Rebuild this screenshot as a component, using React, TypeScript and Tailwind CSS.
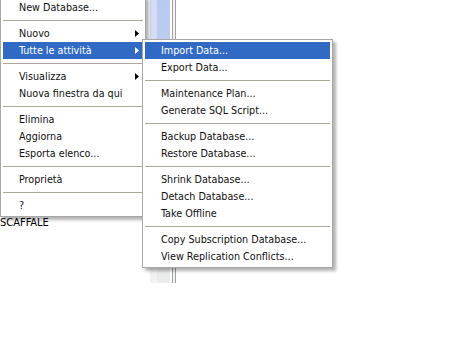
import React from 'react';

type Entry = { label?: string; sep?: boolean; sub?: boolean; active?: boolean };

const mainItems: Entry[] = [
  { label: 'New Database...' },
  { sep: true },
  { label: 'Nuovo', sub: true },
  { label: 'Tutte le attività', sub: true, active: true },
  { sep: true },
  { label: 'Visualizza', sub: true },
  { label: 'Nuova finestra da qui' },
  { sep: true },
  { label: 'Elimina' },
  { label: 'Aggiorna' },
  { label: 'Esporta elenco...' },
  { sep: true },
  { label: 'Proprietà' },
  { sep: true },
  { label: '?' },
];

const taskItems: Entry[] = [
  { label: 'Import Data...', active: true },
  { label: 'Export Data...' },
  { sep: true },
  { label: 'Maintenance Plan...' },
  { label: 'Generate SQL Script...' },
  { sep: true },
  { label: 'Backup Database...' },
  { label: 'Restore Database...' },
  { sep: true },
  { label: 'Shrink Database...' },
  { label: 'Detach Database...' },
  { label: 'Take Offline' },
  { sep: true },
  { label: 'Copy Subscription Database...' },
  { label: 'View Replication Conflicts...' },
];

const Arrow: React.FC<{ white?: boolean }> = ({ white }) => (
  <svg width="4" height="7" viewBox="0 0 4 7" className="mr-[4px]">
    <path d="M0 0 L4 3.5 L0 7 Z" fill={white ? '#ffffff' : '#000000'} />
  </svg>
);

const MenuList: React.FC<{ items: Entry[] }> = ({ items }) => (
  <>
    {items.map((it, i) =>
      it.sep ? (
        <div key={i} className="h-[9px] flex items-center">
          <div className="h-px w-full bg-[#aca899]" />
        </div>
      ) : (
        <div
          key={i}
          className={`h-[17px] flex items-center justify-between pl-[16px] leading-[17px] ${
            it.active ? 'bg-[#316ac5] text-white' : 'text-[#111]'
          }`}
        >
          <span className="whitespace-nowrap">{it.label}</span>
          {it.sub && <Arrow white={it.active} />}
        </div>
      )
    )}
  </>
);

export default function App() {
  return (
    <div
      className="relative w-[458px] h-[346px] bg-white overflow-hidden text-[10.7px]"
      style={{ fontFamily: '"DejaVu Sans Condensed", Tahoma, "Liberation Sans", sans-serif' }}
    >
      {/* background pane behind the menus */}
      <div className="flex h-[283px]">
        <div className="w-[150px] flex flex-col justify-end pb-[53px]">
          <div className="leading-[14px] text-[11px] text-black">SCAFFALE</div>
        </div>
        <div className="w-[7px] bg-gradient-to-b from-[#d3dcf5] via-[#dde3f3] to-[#f2f2f2]" />
        <div className="w-[13px] bg-gradient-to-b from-[#b8c9f1] via-[#c9d4ee] to-[#ececec]" />
        <div className="w-[2px] bg-white" />
        <div className="w-px bg-[#a0a0a0]" />
        <div className="w-[2px] bg-[#f4f4f4]" />
        <div className="w-px bg-[#a0a0a0]" />
      </div>

      {/* context menu */}
      <div className="absolute left-0 top-[-4px] w-[146px] bg-white border border-[#a7a7a7] p-[2px] shadow-[3px_3px_3px_rgba(0,0,0,0.3)]">
        <MenuList items={mainItems} />
      </div>

      {/* Tutte le attività submenu */}
      <div className="absolute left-[142px] top-[39px] w-[191px] bg-white border border-[#a7a7a7] p-[2px] shadow-[3px_3px_3px_rgba(0,0,0,0.3)]">
        <MenuList items={taskItems} />
      </div>
    </div>
  );
}
